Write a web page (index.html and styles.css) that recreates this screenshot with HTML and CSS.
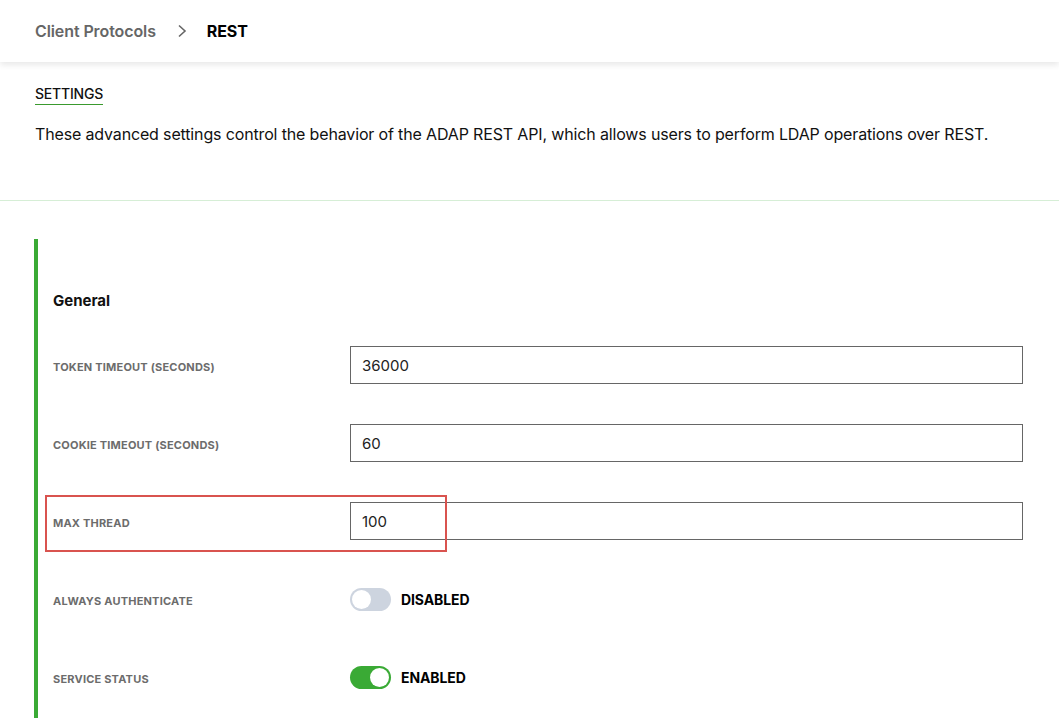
FILE: index.html
```html
<!DOCTYPE html>
<html lang="en">
<head>
  <meta charset="UTF-8">
  <title>REST - Client Protocols</title>
  <link rel="stylesheet" href="styles.css">
</head>
<body>
  <header class="topbar">
    <nav class="crumbs">
      <span class="crumb-parent">Client Protocols</span>
      <svg class="crumb-sep" width="10" height="14" viewBox="0 0 10 14"><path d="M2 1.5 L8 7 L2 12.5" fill="none" stroke="#666" stroke-width="1.6"/></svg>
      <span class="crumb-current">REST</span>
    </nav>
  </header>

  <section class="intro">
    <div class="tab">SETTINGS</div>
    <p class="desc">These advanced settings control the behavior of the ADAP REST API, which allows users to perform LDAP operations over REST.</p>
  </section>

  <main class="panel">
    <h2 class="panel-title">General</h2>

    <div class="row">
      <label class="label">Token Timeout (Seconds)</label>
      <input class="field" type="text" value="36000">
    </div>
    <div class="row">
      <label class="label">Cookie Timeout (Seconds)</label>
      <input class="field" type="text" value="60">
    </div>
    <div class="row">
      <div class="highlight"></div>
      <label class="label">Max Thread</label>
      <input class="field" type="text" value="100">
    </div>
    <div class="row">
      <label class="label">Always Authenticate</label>
      <div class="switch-wrap">
        <span class="switch"><span class="knob"></span></span>
        <span class="switch-text">DISABLED</span>
      </div>
    </div>
    <div class="row">
      <label class="label">Service Status</label>
      <div class="switch-wrap">
        <span class="switch on"><span class="knob"></span></span>
        <span class="switch-text">ENABLED</span>
      </div>
    </div>
  </main>
</body>
</html>
```

FILE: styles.css
```css
body {
  margin: 0;
  font-family: Inter, "Liberation Sans", Arial, sans-serif;
  background-color: #fff;
  color: #111;
  height: 718px;
  overflow: hidden;
}

.topbar {
  height: 62px;
  background-color: #fff;
  box-shadow: 0 3px 6px rgba(0, 0, 0, 0.09);
  display: flex;
  align-items: center;
  padding-left: 35px;
  position: relative;
}

.crumbs {
  display: flex;
  align-items: center;
  font-size: 16px;
  font-weight: 600;
  letter-spacing: -0.1px;
}

.crumb-parent {
  color: #666;
}

.crumb-sep {
  margin: 0 20px 0 21px;
}

.crumb-current {
  color: #000;
  font-weight: 700;
}

.intro {
  padding: 21px 35px 0 35px;
  height: 117px;
  border-bottom: 1px solid #d6eed6;
}

.tab {
  display: inline-block;
  font-size: 14px;
  font-weight: 500;
  letter-spacing: -0.2px;
  color: #111;
  padding-bottom: 2px;
  border-bottom: 1px solid #3a9a2e;
}

.desc {
  margin: 19px 0 0 0;
  font-size: 16px;
  letter-spacing: -0.15px;
  color: #111;
}

.panel {
  margin: 38px 36px 0 34px;
  border-left: 4px solid #3aaa35;
  padding: 52px 0 0 15px;
  height: 460px;
}

.panel-title {
  margin: 0 0 15px 0;
  font-size: 15px;
  font-weight: 700;
  line-height: 20px;
}

.row {
  position: relative;
  height: 78px;
  display: flex;
  align-items: center;
}

.label {
  width: 297px;
  padding-top: 3px;
  font-size: 11px;
  font-weight: 700;
  text-transform: uppercase;
  letter-spacing: 0.2px;
  color: #6c6c6c;
}

.field {
  width: 673px;
  height: 38px;
  box-sizing: border-box;
  border: 1px solid #666;
  border-radius: 0;
  padding: 0 11px;
  font-family: inherit;
  font-size: 15px;
  color: #222;
  outline: none;
}

.highlight {
  position: absolute;
  left: -8px;
  top: 13px;
  width: 398px;
  height: 53px;
  border: 2px solid #d9534f;
  pointer-events: none;
}

.switch-wrap {
  display: flex;
  align-items: center;
}

.switch {
  width: 41px;
  height: 23px;
  border-radius: 12px;
  background-color: #cdd4df;
  position: relative;
  display: inline-block;
}

.switch .knob {
  position: absolute;
  top: 2px;
  left: 2px;
  width: 19px;
  height: 19px;
  border-radius: 50%;
  background-color: #fff;
}

.switch.on {
  background-color: #3aaa35;
}

.switch.on .knob {
  left: 20px;
}

.switch-text {
  margin-left: 10px;
  font-size: 14px;
  font-weight: 700;
  letter-spacing: -0.1px;
  color: #000;
}
```
